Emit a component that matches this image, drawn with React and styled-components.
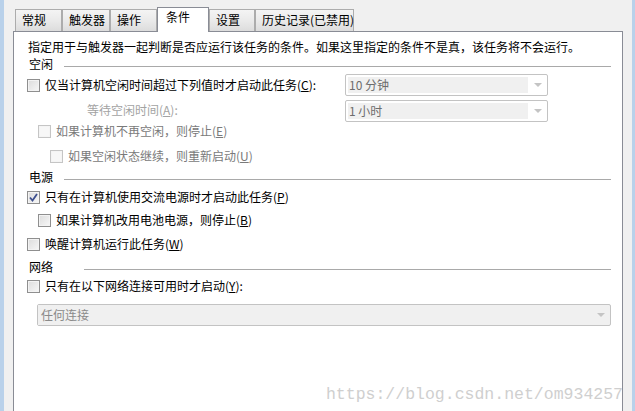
import React from "react";
import styled, { createGlobalStyle } from "styled-components";

const GlobalStyle = createGlobalStyle`
  html, body {
    margin: 0;
    padding: 0;
    background: #f0f0f0;
  }
  body {
    font-family: "Noto Sans CJK SC", "Noto Sans", sans-serif;
    font-size: 12px;
    color: #000;
  }
`;

const tabs = [
  { label: "常规", w: 47 },
  { label: "触发器", w: 48 },
  { label: "操作", w: 47 },
  { label: "条件", w: 52, active: true },
  { label: "设置", w: 46 },
  { label: "历史记录(已禁用)", w: 99 },
];

function Check({ checked, disabled }) {
  return (
    <Box $disabled={disabled}>
      {checked && (
        <svg width="9" height="9" viewBox="0 0 9 9">
          <path d="M1 4.5 L3.5 7.5 L8 1" fill="none" stroke="#3d4f8e" strokeWidth="1.8" />
        </svg>
      )}
    </Box>
  );
}

function Combo({ value, wide }) {
  return (
    <ComboBox $wide={wide}>
      <ComboValue $wide={wide}>{value}</ComboValue>
      <ComboArrow>
        <svg width="8" height="5" viewBox="0 0 8 5">
          <path d="M0 0 H8 L4 4 Z" fill="#c4c4c4" />
        </svg>
      </ComboArrow>
    </ComboBox>
  );
}

function CheckRow({ indent = 0, mt, checked, disabled, children }) {
  return (
    <Row $mt={mt}>
      <CheckItem $indent={indent}>
        <Check checked={checked} disabled={disabled} />
        <Label $disabled={disabled}>{children}</Label>
      </CheckItem>
    </Row>
  );
}

function Section({ title, mt, lineFrom }) {
  return (
    <SectionRow $mt={mt}>
      <SectionTitle $w={lineFrom}>{title}</SectionTitle>
      <SectionLine />
    </SectionRow>
  );
}

export default function App() {
  return (
    <>
      <GlobalStyle />
      <Window>
        <TabStrip>
          {tabs.map((t) => (
            <Tab key={t.label} $w={t.w} $active={t.active}>
              {t.label}
            </Tab>
          ))}
        </TabStrip>
        <Panel>
          <Description>
            指定用于与触发器一起判断是否应运行该任务的条件。如果这里指定的条件不是真，该任务将不会运行。
          </Description>

          <Section title="空闲" mt={1} lineFrom={35} />
          <Row $mt={2}>
            <LeftCol>
              <CheckItem $indent={0}>
                <Check />
                <Label>
                  仅当计算机空闲时间超过下列值时才启动此任务(<u>C</u>):
                </Label>
              </CheckItem>
            </LeftCol>
            <Combo value="10 分钟" />
          </Row>
          <Row $mt={4}>
            <LeftCol>
              <WaitLabel>
                等待空闲时间(<u>A</u>):
              </WaitLabel>
            </LeftCol>
            <Combo value="1 小时" />
          </Row>
          <CheckRow indent={11} mt={1} disabled>
            如果计算机不再空闲，则停止(<u>E</u>)
          </CheckRow>
          <CheckRow indent={23} mt={9} disabled>
            如果空闲状态继续，则重新启动(<u>U</u>)
          </CheckRow>

          <Section title="电源" mt={5} lineFrom={35} />
          <CheckRow mt={4} checked>
            只有在计算机使用交流电源时才启动此任务(<u>P</u>)
          </CheckRow>
          <CheckRow indent={11} mt={7}>
            如果计算机改用电池电源，则停止(<u>B</u>)
          </CheckRow>
          <CheckRow mt={8}>
            唤醒计算机运行此任务(<u>W</u>)
          </CheckRow>

          <Section title="网络" mt={7} lineFrom={55} />
          <CheckRow mt={3}>
            只有在以下网络连接可用时才启动(<u>Y</u>):
          </CheckRow>
          <NetworkRow>
            <Combo value="任何连接" wide />
          </NetworkRow>

          <Watermark>https://blog.csdn.net/om934257</Watermark>
        </Panel>
      </Window>
    </>
  );
}

const Window = styled.div`
  height: 411px;
  box-sizing: border-box;
  border-left: 4px solid #b9d1ea;
  border-right: 3px solid #b9d1ea;
  padding: 7px 9px 0 9px;
  display: flex;
  flex-direction: column;
  overflow: hidden;
  background: #f0f0f0;
`;

const TabStrip = styled.div`
  display: flex;
  align-items: flex-end;
  padding-left: 2px;
  height: 25px;
  position: relative;
  z-index: 2;
  margin-bottom: -1px;
`;

const Tab = styled.div`
  width: ${(p) => p.$w}px;
  box-sizing: border-box;
  height: ${(p) => (p.$active ? 25 : 22)}px;
  margin-bottom: ${(p) => (p.$active ? 0 : 1)}px;
  border: 1px solid ${(p) => (p.$active ? "#898c95" : "#acacac")};
  border-bottom: none;
  border-left-width: ${(p) => (p.$active ? 1 : 1)}px;
  background: ${(p) =>
    p.$active ? "#fff" : "linear-gradient(#f4f4f4, #e9e9e9 55%, #dcdcdc)"};
  padding: ${(p) => (p.$active ? "1px 0 0 8px" : "2px 0 0 6px")};
  line-height: 16px;
  white-space: nowrap;
  & + & {
    margin-left: 0;
  }
`;

const Panel = styled.div`
  position: relative;
  flex: 1;
  background: #fff;
  border: 1px solid #898c95;
  border-bottom: none;
  padding: 7px 11px 0 13px;
  display: flex;
  flex-direction: column;
  overflow: hidden;
`;

const Description = styled.div`
  height: 16px;
  line-height: 16px;
  padding-left: 1px;
  white-space: nowrap;
`;

const SectionRow = styled.div`
  margin-top: ${(p) => p.$mt}px;
  height: 16px;
  display: flex;
  align-items: center;
  padding-left: 2px;
`;

const SectionTitle = styled.div`
  width: ${(p) => p.$w}px;
  line-height: 16px;
  flex-shrink: 0;
`;

const SectionLine = styled.div`
  flex: 1;
  height: 1px;
  margin-top: 5px;
  background: #a9a9a9;
`;

const Row = styled.div`
  margin-top: ${(p) => p.$mt}px;
  display: flex;
  align-items: center;
  min-height: 16px;
`;

const LeftCol = styled.div`
  width: 318px;
  flex-shrink: 0;
`;

const CheckItem = styled.div`
  display: flex;
  align-items: center;
  padding-left: ${(p) => p.$indent}px;
  height: 16px;
`;

const Box = styled.span`
  width: 13px;
  height: 13px;
  box-sizing: border-box;
  border: 1px solid ${(p) => (p.$disabled ? "#c5c5c5" : "#8f8f8f")};
  background: ${(p) =>
    p.$disabled
      ? "#f7f7f7"
      : "linear-gradient(135deg, #dcdcdc, #f7f7f7)"};
  box-shadow: inset 0 0 0 1px ${(p) => (p.$disabled ? "#f4f4f4" : "#f3f3f3")};
  display: flex;
  align-items: center;
  justify-content: center;
  flex-shrink: 0;
`;

const Label = styled.span`
  margin-left: 5px;
  line-height: 16px;
  white-space: nowrap;
  color: ${(p) => (p.$disabled ? "#7a7a7a" : "#000")};
`;

const WaitLabel = styled.div`
  padding-left: 60px;
  color: #a3a3a3;
  line-height: 16px;
  margin-top: -2px;
`;

const ComboBox = styled.div`
  width: ${(p) => (p.$wide ? "auto" : "203px")};
  flex: ${(p) => (p.$wide ? 1 : "none")};
  height: 22px;
  box-sizing: border-box;
  border: 1px solid #c3c3c3;
  border-radius: 2px;
  background: ${(p) => (p.$wide ? "#f0f0f0" : "#fff")};
  display: flex;
  align-items: stretch;
  padding: ${(p) => (p.$wide ? "0" : "2px 0 2px 2px")};
`;

const ComboValue = styled.div`
  flex: 1;
  background: #f0f0f0;
  color: ${(p) => (p.$wide ? "#8a8a8a" : "#6d6d6d")};
  line-height: ${(p) => (p.$wide ? 20 : 16)}px;
  padding-left: ${(p) => (p.$wide ? 3 : 1)}px;
  white-space: nowrap;
`;

const ComboArrow = styled.div`
  width: 19px;
  display: flex;
  align-items: center;
  justify-content: center;
  padding-top: 1px;
`;

const NetworkRow = styled.div`
  margin-top: 10px;
  display: flex;
  padding-left: 10px;
`;

const Watermark = styled.div`
  position: absolute;
  right: -1px;
  bottom: 7px;
  font-family: "Liberation Mono", monospace;
  font-size: 16.5px;
  color: #cfcfcf;
  white-space: nowrap;
  pointer-events: none;
`;
